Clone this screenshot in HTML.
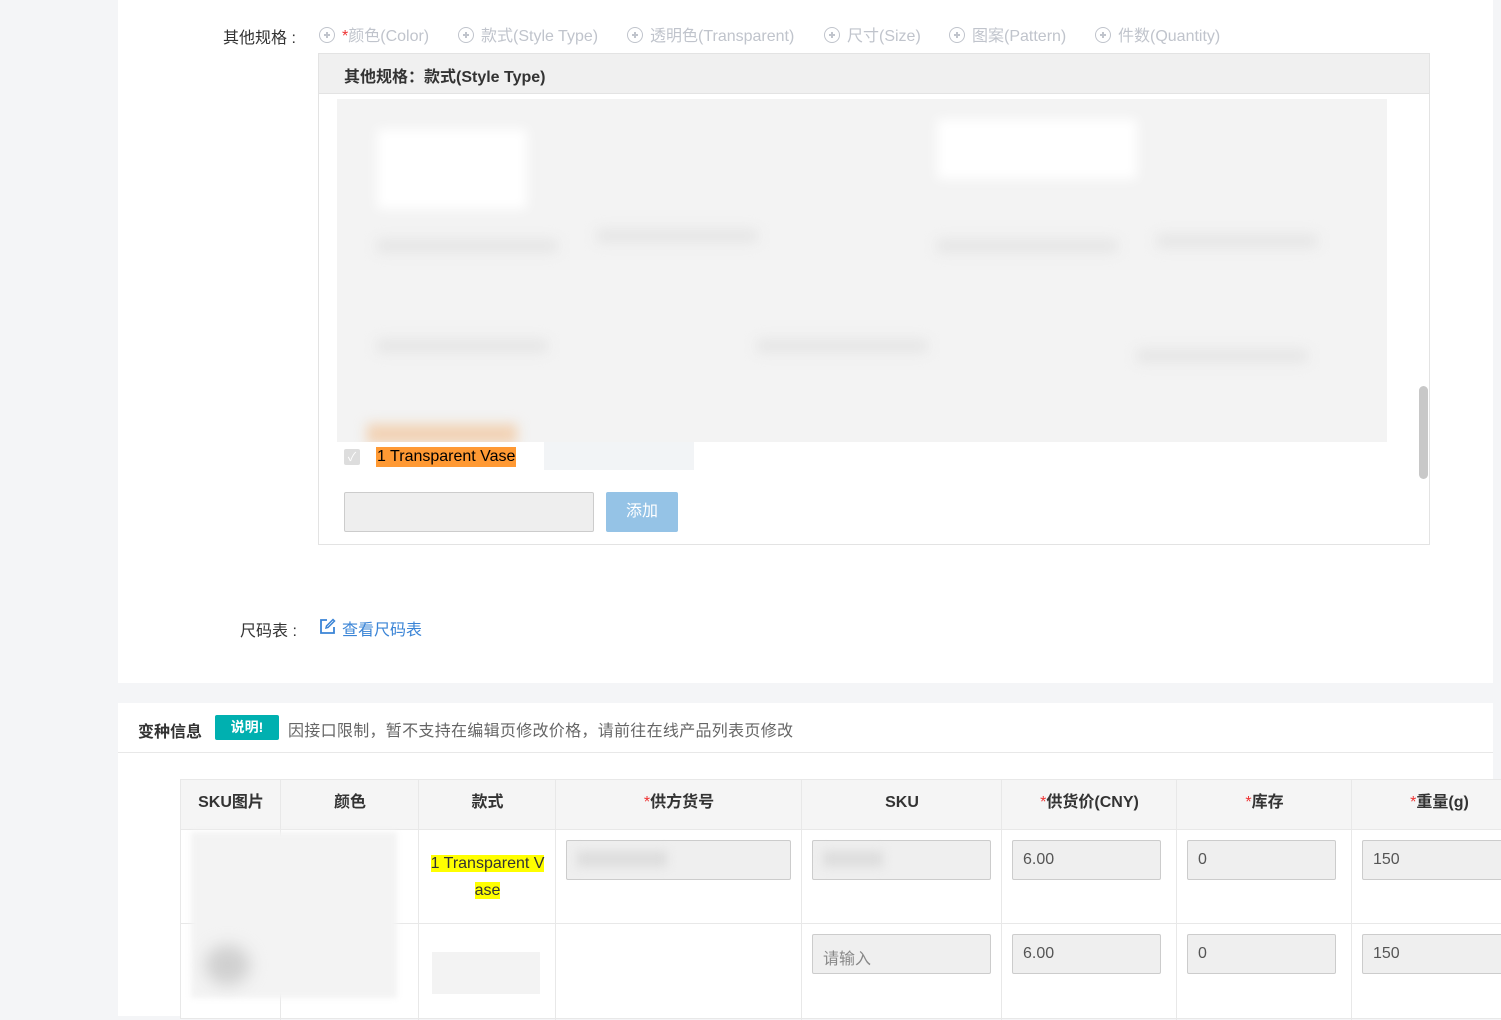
<!DOCTYPE html>
<html><head><meta charset="utf-8"><style>
*{box-sizing:border-box;margin:0;padding:0}
body{width:1501px;height:1016px;overflow:hidden;background:#f4f5f7;font-family:"Liberation Sans","Noto Sans CJK SC",sans-serif;position:relative;color:#333}
.abs{position:absolute}
.card{position:absolute;background:#fff;left:118px;width:1375px}
.opt{position:absolute;top:22px;font-size:16px;color:#c0c4cc;white-space:nowrap}
.opt i{display:inline-block;width:16px;height:16px;border:1.5px solid #c0c4cc;border-radius:50%;vertical-align:-2px;margin-right:7px;position:relative;font-style:normal}
.opt i:before{content:"";position:absolute;left:3.5px;top:6px;width:6px;height:1.5px;background:#c0c4cc}
.opt i:after{content:"";position:absolute;left:6px;top:3.5px;width:1.5px;height:6px;background:#c0c4cc}
.blur{position:absolute;background:#e6e6e6;filter:blur(6px)}
.inp{position:absolute;height:40px;border:1px solid #ccc;background:#efefef;border-radius:2px;font-size:16px;color:#555;padding:10px 10px}
.th{position:absolute;top:780px;height:50px;line-height:46px;text-align:center;font-weight:bold;font-size:16px;color:#333}
.th b{color:#e33;font-weight:normal}
</style></head><body>
<div class="card" style="top:0;height:683px"></div>
<div class="card" style="top:703px;height:313px"></div>
<div class="abs" style="left:118px;top:752px;width:1375px;height:1px;background:#e8e8e8"></div>

<div class="abs" style="left:223px;top:24px;font-size:16px;color:#333">其他规格 :</div>
<div class="opt" style="left:319px"><i></i><span style="color:#e33">*</span>颜色(Color)</div>
<div class="opt" style="left:458px"><i></i>款式(Style Type)</div>
<div class="opt" style="left:627px"><i></i>透明色(Transparent)</div>
<div class="opt" style="left:824px"><i></i>尺寸(Size)</div>
<div class="opt" style="left:949px"><i></i>图案(Pattern)</div>
<div class="opt" style="left:1095px"><i></i>件数(Quantity)</div>

<div class="abs" style="left:318px;top:53px;width:1112px;height:492px;border:1px solid #e3e3e3;background:#fff"></div>
<div class="abs" style="left:319px;top:54px;width:1110px;height:40px;background:#f0f0f0;border-bottom:1px solid #e3e3e3;font-weight:bold;font-size:16px;padding:9px 25px">其他规格：款式(Style Type)</div>
<div class="abs" style="left:337px;top:99px;width:1050px;height:343px;background:#f3f3f3;overflow:hidden">
 <div class="blur" style="left:40px;top:30px;width:150px;height:80px;background:#fff"></div>
 <div class="blur" style="left:600px;top:20px;width:200px;height:60px;background:#fff"></div>
 <div class="blur" style="left:40px;top:140px;width:180px;height:14px"></div>
 <div class="blur" style="left:260px;top:130px;width:160px;height:14px"></div>
 <div class="blur" style="left:600px;top:140px;width:180px;height:14px"></div>
 <div class="blur" style="left:820px;top:135px;width:160px;height:14px"></div>
 <div class="blur" style="left:40px;top:240px;width:170px;height:14px"></div>
 <div class="blur" style="left:420px;top:240px;width:170px;height:14px"></div>
 <div class="blur" style="left:800px;top:250px;width:170px;height:14px"></div>
 <div class="blur" style="left:30px;top:325px;width:150px;height:20px;background:#f2d2b4"></div>
</div>
<div class="abs" style="left:1419px;top:386px;width:9px;height:93px;background:#c8c8c8;border-radius:5px"></div>
<div class="abs" style="left:344px;top:449px;width:16px;height:16px;background:#ddd;border-radius:2px;color:#fff;font-size:12px;text-align:center;line-height:16px">✓</div>
<div class="abs" style="left:376px;top:447px;height:20px;background:#ff9933;color:#000;font-size:16px;line-height:20px;padding:0 1px">1 Transparent Vase</div>
<div class="abs" style="left:544px;top:442px;width:150px;height:28px;background:#f2f4f6"></div>
<div class="inp" style="left:344px;top:492px;width:250px;background:#eee"></div>
<div class="abs" style="left:606px;top:492px;width:72px;height:40px;background:#95c3e6;color:#fff;font-size:16px;text-align:center;line-height:40px;border-radius:2px">添加</div>

<div class="abs" style="left:240px;top:617px;font-size:16px">尺码表 :</div>
<svg class="abs" style="left:319px;top:618px" width="17" height="17" viewBox="0 0 17 17"><path d="M8 2H2v13h13V9" fill="none" stroke="#3a84d6" stroke-width="1.8"/><path d="M14 1.5l1.5 1.5L9 9.5 7 10l.5-2z" fill="none" stroke="#3a84d6" stroke-width="1.5"/></svg>
<div class="abs" style="left:342px;top:616px;font-size:16px;color:#3a84d6">查看尺码表</div>

<div class="abs" style="left:138px;top:718px;font-size:16px;font-weight:bold">变种信息</div>
<div class="abs" style="left:215px;top:715px;width:64px;height:25px;background:#00b0b0;color:#fff;font-size:14px;font-weight:bold;text-align:center;line-height:25px;border-radius:2px">说明!</div>
<div class="abs" style="left:288px;top:717px;font-size:16px;color:#666;letter-spacing:0.3px">因接口限制，暂不支持在编辑页修改价格，请前往在线产品列表页修改</div>

<div class="abs" style="left:180px;top:779px;width:1330px;height:240px;border:1px solid #e8e8e8;background:#fff"></div>
<div class="abs" style="left:181px;top:780px;width:1330px;height:50px;background:#f5f5f5;border-bottom:1px solid #e8e8e8"></div>
<div class="abs" style="left:181px;top:923px;width:1330px;height:1px;background:#e8e8e8"></div>
<div class="abs" style="left:280px;top:780px;width:1px;height:240px;background:#e8e8e8"></div>
<div class="abs" style="left:418px;top:780px;width:1px;height:240px;background:#e8e8e8"></div>
<div class="abs" style="left:555px;top:780px;width:1px;height:240px;background:#e8e8e8"></div>
<div class="abs" style="left:801px;top:780px;width:1px;height:240px;background:#e8e8e8"></div>
<div class="abs" style="left:1001px;top:780px;width:1px;height:240px;background:#e8e8e8"></div>
<div class="abs" style="left:1176px;top:780px;width:1px;height:240px;background:#e8e8e8"></div>
<div class="abs" style="left:1351px;top:780px;width:1px;height:240px;background:#e8e8e8"></div>
<div class="th" style="left:181px;width:100px">SKU图片</div>
<div class="th" style="left:281px;width:138px">颜色</div>
<div class="th" style="left:419px;width:137px">款式</div>
<div class="th" style="left:556px;width:246px"><b>*</b>供方货号</div>
<div class="th" style="left:802px;width:200px">SKU</div>
<div class="th" style="left:1002px;width:175px"><b>*</b>供货价(CNY)</div>
<div class="th" style="left:1177px;width:175px"><b>*</b>库存</div>
<div class="th" style="left:1352px;width:175px"><b>*</b>重量(g)</div>

<div class="abs" style="left:191px;top:832px;width:206px;height:166px;background:#f3f3f3;filter:blur(3px)"></div>
<div class="abs" style="left:205px;top:945px;width:45px;height:40px;background:#d0d0d0;filter:blur(8px);border-radius:50%"></div>
<div class="abs" style="left:419px;top:850px;width:137px;text-align:center;font-size:16px;line-height:27px"><span style="background:#ff0">1 Transparent V</span><br><span style="background:#ff0">ase</span></div>
<div class="abs" style="left:432px;top:952px;width:108px;height:42px;background:#f3f3f3"></div>
<div class="inp" style="left:566px;top:840px;width:225px"><div style="width:90px;height:16px;background:#ddd;filter:blur(5px)"></div></div>
<div class="inp" style="left:812px;top:840px;width:179px"><div style="width:60px;height:16px;background:#ddd;filter:blur(5px)"></div></div>
<div class="inp" style="left:1012px;top:840px;width:149px">6.00</div>
<div class="inp" style="left:1187px;top:840px;width:149px">0</div>
<div class="inp" style="left:1362px;top:840px;width:160px">150</div>
<div class="inp" style="left:812px;top:934px;width:179px;color:#888">请输入</div>
<div class="inp" style="left:1012px;top:934px;width:149px">6.00</div>
<div class="inp" style="left:1187px;top:934px;width:149px">0</div>
<div class="inp" style="left:1362px;top:934px;width:160px">150</div>
</body></html>
